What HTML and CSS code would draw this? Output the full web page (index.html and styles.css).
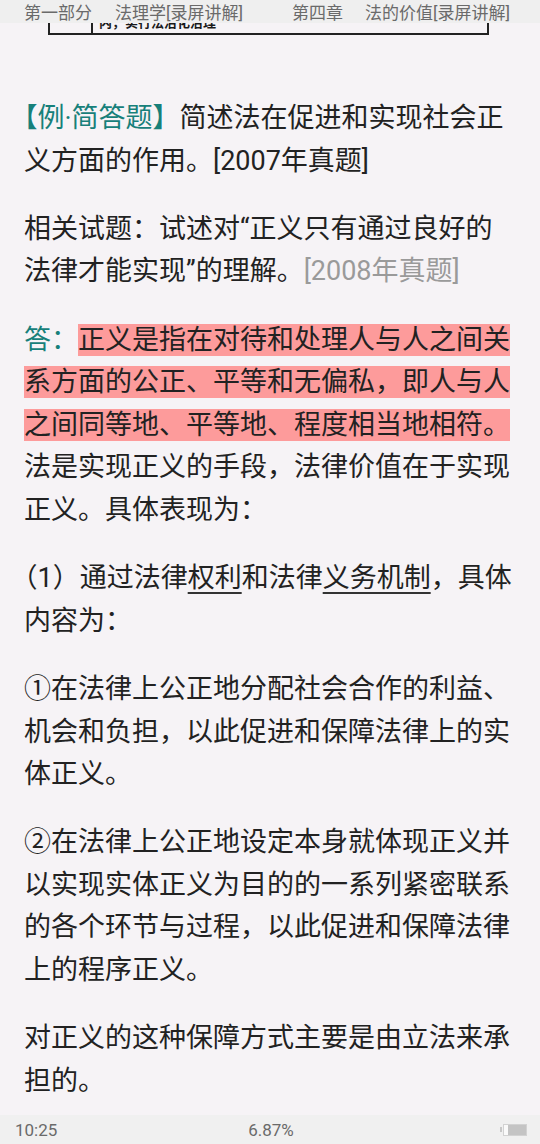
FILE: index.html
```html
<!DOCTYPE html>
<html lang="zh-CN">
<head>
<meta charset="utf-8">
<title>法的价值</title>
<link rel="stylesheet" href="styles.css">
</head>
<body>
<div class="page">
  <div class="topbar">
    <span class="crumb">第一部分</span>
    <span class="crumb crumb-gap">法理学[录屏讲解]</span>
    <span class="crumb crumb-right">第四章</span>
    <span class="crumb crumb-gap2">法的价值[录屏讲解]</span>
  </div>
  <div class="frag">
    <div class="frag-cell frag-first"></div>
    <div class="frag-cell frag-text">内，实行法治化治理</div>
  </div>
  <main class="content">
    <p class="para"><span class="label"><span class="open">【</span>例·简答题】</span>简述法在促进和实现社会正义方面的作用。[2007年真题]</p>
    <p class="para">相关试题：试述对“正义只有通过良好的法律才能实现”的理解。<span class="muted">[2008年真题]</span></p>
    <p class="para"><span class="teal">答：</span><span class="hl">正义是指在对待和处理人与人之间关系方面的公正、平等和无偏私，即人与人之间同等地、平等地、程度相当地相符。</span>法是实现正义的手段，法律价值在于实现正义。具体表现为：</p>
    <p class="para"><span class="open">（</span>1）通过法律<span class="ul">权利</span>和法律<span class="ul">义务机制</span>，具体内容为：</p>
    <p class="para">①在法律上公正地分配社会合作的利益、机会和负担，以此促进和保障法律上的实体正义。</p>
    <p class="para">②在法律上公正地设定本身就体现正义并以实现实体正义为目的的一系列紧密联系的各个环节与过程，以此促进和保障法律上的程序正义。</p>
    <p class="para">对正义的这种保障方式主要是由立法来承担的。</p>
  </main>
  <footer class="statusbar">
    <span class="time">10:25</span>
    <span class="pct">6.87%</span>
    <span class="battery"><span class="nub"></span><span class="cell"><span class="fill"></span></span></span>
  </footer>
</div>
</body>
</html>
```
FILE: styles.css
```css
html, body {
  margin: 0;
  padding: 0;
}
body {
  background: #f6f3f6;
  font-family: Roboto, "Noto Sans CJK SC", sans-serif;
  color: #222;
}
.page {
  position: relative;
  width: 540px;
  height: 1144px;
  overflow: hidden;
  display: flex;
  flex-direction: column;
}
.topbar {
  position: absolute;
  top: 0;
  left: 0;
  right: 0;
  height: 23px;
  background: #efefef;
  display: flex;
  align-items: center;
  padding: 0 24px 0 24px;
  font-size: 17px;
  color: #6a6a6a;
  white-space: nowrap;
  z-index: 2;
}
.crumb-gap { margin-left: 23px; }
.crumb-right { margin-left: 49px; }
.crumb-gap2 { margin-left: 22px; }

.frag {
  flex: none;
  height: 33px;
  margin: 0 51px 0 48px;
  border-left: 2px solid #222;
  border-right: 2px solid #222;
  border-bottom: 2px solid #222;
  display: flex;
}
.frag-first {
  width: 41px;
  border-right: 2px solid #222;
}
.frag-text {
  padding-left: 6px;
  padding-top: 14px;
  font-size: 13px;
  line-height: 16px;
  font-weight: 700;
  color: #1a1a1a;
  font-family: "Noto Sans CJK SC", sans-serif;
}

.content {
  flex: 1;
  min-height: 0;
  overflow: hidden;
  padding: 62px 26px 0 24px;
  font-size: 27px;
  line-height: 42.6px;
}
.para {
  margin: 0 0 25.6px;
}
.para:last-child {
  margin-bottom: 0;
}
.open {
  font-feature-settings: "halt" 1;
}
.label {
  color: #17807a;
}
.teal {
  color: #17807a;
}
.muted {
  color: #9a9a9a;
}
.hl {
  background: #fd9b9b;
}
.ul {
  text-decoration: underline;
  text-decoration-thickness: 1.5px;
  text-underline-offset: 5px;
  text-decoration-color: #333;
}

.statusbar {
  flex: none;
  height: 29px;
  background: #f0f0f0;
  display: grid;
  grid-template-columns: 1fr auto 1fr;
  align-items: center;
  padding: 0 13px 0 15px;
  font-size: 17px;
  color: #6a6a6a;
}
.pct {
  justify-self: center;
}
.battery {
  justify-self: end;
  display: flex;
  align-items: center;
  gap: 1px;
}
.nub {
  width: 2px;
  height: 5px;
  background: #c8c8c8;
}
.cell {
  width: 22px;
  height: 10px;
  border: 1px solid #d2d2d2;
  background: #fafafa;
  display: flex;
  justify-content: flex-end;
}
.fill {
  width: 18px;
  height: 10px;
  background: #c4c4c4;
}
```
